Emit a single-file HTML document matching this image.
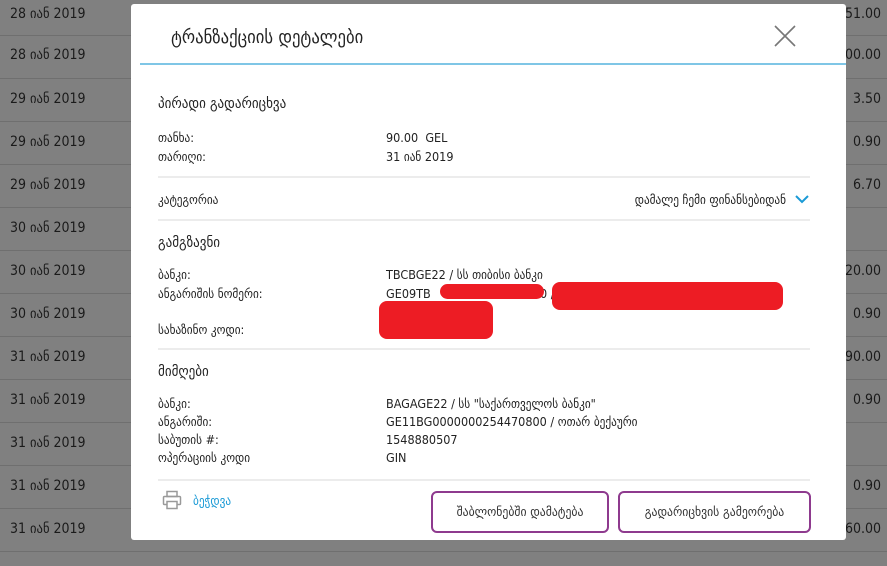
<!DOCTYPE html>
<html><head><meta charset="utf-8"><style>
*{margin:0;padding:0;box-sizing:border-box}
body{width:887px;height:566px;overflow:hidden;background:#808080;font-family:"Liberation Sans","DejaVu Sans",sans-serif;position:relative;color:#222}
.row{position:absolute;left:0;width:887px;height:43px;border-bottom:1px solid #6f6f6f}
.d{position:absolute;left:10px;font-size:14px;color:#1a1a1a;font-family:"DejaVu Sans Condensed","DejaVu Sans",sans-serif}
.a{position:absolute;right:6px;font-size:14px;color:#1a1a1a;font-family:"DejaVu Sans Condensed","DejaVu Sans",sans-serif}
.m{position:absolute;left:131px;top:4px;width:715px;height:536px;background:#fff;border-radius:3px}
.t{position:absolute;font-size:12.5px;color:#222;font-family:"DejaVu Sans Condensed","DejaVu Sans",sans-serif;white-space:nowrap}
.h{position:absolute;font-size:14.5px;color:#222;font-family:"DejaVu Sans Condensed","DejaVu Sans",sans-serif;white-space:nowrap}
.hr{position:absolute;left:27px;width:652px;height:2px;background:#ececec}
.red{position:absolute;background:#ed1c24;border-radius:8px}
.btn{position:absolute;top:487px;height:42px;border:2px solid #8e3a8e;border-radius:6px;font-size:13px;font-family:"DejaVu Sans Condensed","DejaVu Sans",sans-serif;color:#333;display:flex;align-items:center;justify-content:center}
</style></head><body>
<div class="row" style="top:-7px"><span class="d" style="top:13px">28 იან 2019</span><span class="a" style="top:13px">51.00</span></div>
<div class="row" style="top:36px"><span class="d" style="top:11px">28 იან 2019</span><span class="a" style="top:11px">00.00</span></div>
<div class="row" style="top:79px"><span class="d" style="top:12px">29 იან 2019</span><span class="a" style="top:12px">3.50</span></div>
<div class="row" style="top:122px"><span class="d" style="top:12px">29 იან 2019</span><span class="a" style="top:12px">0.90</span></div>
<div class="row" style="top:165px"><span class="d" style="top:12px">29 იან 2019</span><span class="a" style="top:12px">6.70</span></div>
<div class="row" style="top:208px"><span class="d" style="top:12px">30 იან 2019</span></div>
<div class="row" style="top:251px"><span class="d" style="top:12px">30 იან 2019</span><span class="a" style="top:12px">20.00</span></div>
<div class="row" style="top:294px"><span class="d" style="top:12px">30 იან 2019</span><span class="a" style="top:12px">0.90</span></div>
<div class="row" style="top:337px"><span class="d" style="top:12px">31 იან 2019</span><span class="a" style="top:12px">90.00</span></div>
<div class="row" style="top:380px"><span class="d" style="top:12px">31 იან 2019</span><span class="a" style="top:12px">0.90</span></div>
<div class="row" style="top:423px"><span class="d" style="top:12px">31 იან 2019</span></div>
<div class="row" style="top:466px"><span class="d" style="top:12px">31 იან 2019</span><span class="a" style="top:12px">0.90</span></div>
<div class="row" style="top:509px"><span class="d" style="top:12px">31 იან 2019</span><span class="a" style="top:12px">60.00</span></div>

<div class="m">
<div class="h" style="left:40px;top:23px;font-size:18.5px">ტრანზაქციის დეტალები</div>
<svg style="position:absolute;left:642px;top:20px" width="24" height="24"><path d="M2 2L22 22M22 2L2 22" stroke="#777" stroke-width="1.6"/></svg>
<div style="position:absolute;left:9px;top:59px;width:706px;height:2px;background:#7fc6e6"></div>
<div class="h" style="left:27px;top:92px">პირადი გადარიცხვა</div>
<div class="t" style="left:27px;top:126px">თანხა:</div>
<div class="t" style="left:255px;top:126px">90.00 &nbsp;GEL</div>
<div class="t" style="left:27px;top:145px">თარიღი:</div>
<div class="t" style="left:255px;top:145px">31 იან 2019</div>
<div class="hr" style="top:172px"></div>
<div class="t" style="left:27px;top:188px">კატეგორია</div>
<div class="t" style="right:60px;top:188px">დამალე ჩემი ფინანსებიდან</div>
<svg style="position:absolute;left:664px;top:190px" width="14" height="10"><path d="M1 2L7 8L13 2" stroke="#1a9ad6" stroke-width="2" fill="none"/></svg>
<div class="hr" style="top:215px"></div>
<div class="h" style="left:27px;top:231px">გამგზავნი</div>
<div class="t" style="left:27px;top:263px">ბანკი:</div>
<div class="t" style="left:255px;top:263px">TBCBGE22 / სს თიბისი ბანკი</div>
<div class="t" style="left:27px;top:282px">ანგარიშის ნომერი:</div>
<div class="t" style="left:255px;top:282px">GE09TB</div>
<div class="t" style="left:409px;top:282px">0 /</div>
<div class="red" style="left:309px;top:280px;width:104px;height:15px"></div>
<div class="red" style="left:421px;top:278px;width:231px;height:28px"></div>
<div class="red" style="left:248px;top:297px;width:114px;height:38px"></div>
<div class="t" style="left:27px;top:318px">სახაზინო კოდი:</div>
<div class="hr" style="top:344px"></div>
<div class="h" style="left:27px;top:360px">მიმღები</div>
<div class="t" style="left:27px;top:392px">ბანკი:</div>
<div class="t" style="left:255px;top:392px">BAGAGE22 / სს "საქართველოს ბანკი"</div>
<div class="t" style="left:27px;top:410px">ანგარიში:</div>
<div class="t" style="left:255px;top:410px">GE11BG0000000254470800 / ოთარ ბექაური</div>
<div class="t" style="left:27px;top:428px">საბუთის #:</div>
<div class="t" style="left:255px;top:428px">1548880507</div>
<div class="t" style="left:27px;top:446px">ოპერაციის კოდი</div>
<div class="t" style="left:255px;top:446px">GIN</div>
<div class="hr" style="top:475px"></div>
<svg style="position:absolute;left:31px;top:486px" width="20" height="20" fill="none" stroke="#999" stroke-width="1.5"><rect x="5" y="1.5" width="10" height="5"/><rect x="1.5" y="6.5" width="17" height="8" rx="1"/><rect x="5" y="11.5" width="10" height="7" fill="#fff"/></svg>
<div class="t" style="left:62px;top:489px;color:#1a9ad6">ბეჭდვა</div>
<div class="btn" style="left:300px;width:178px">შაბლონებში დამატება</div>
<div class="btn" style="left:487px;width:193px">გადარიცხვის გამეორება</div>
</div>
</body></html>
